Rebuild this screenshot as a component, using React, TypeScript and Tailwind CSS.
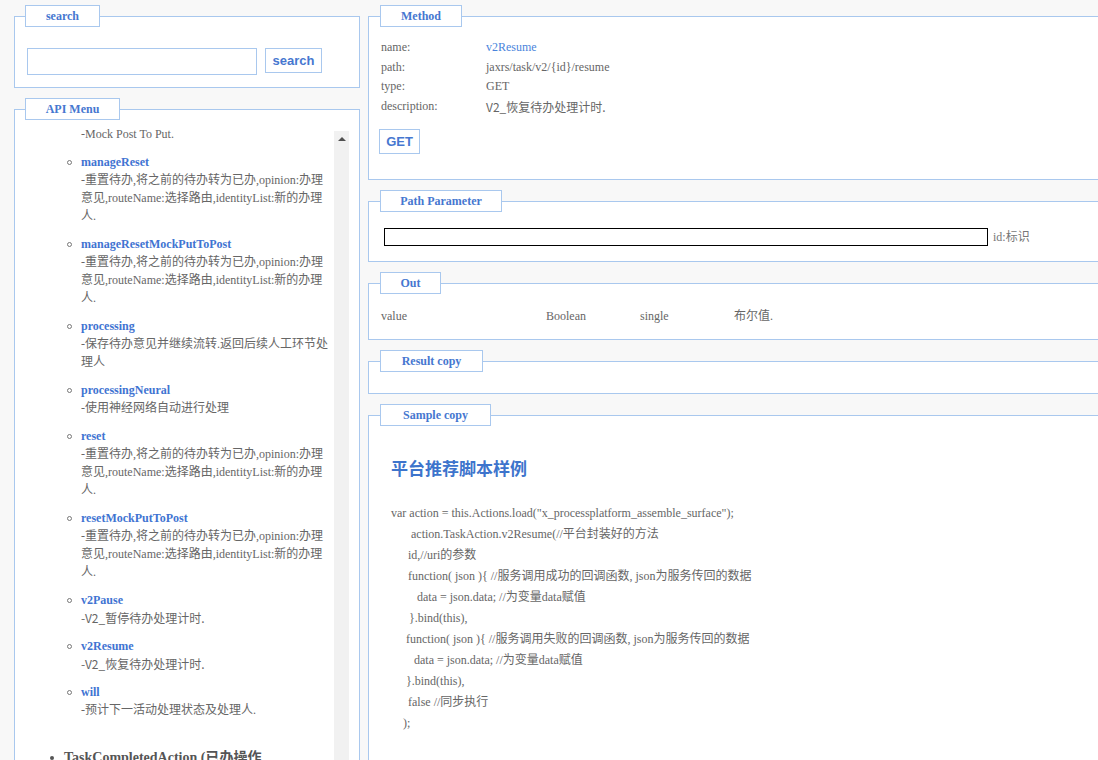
import type { ReactNode } from 'react';

const serif = "font-['Liberation_Serif','Noto_Sans_CJK_SC',serif]";

function Legend({ w, children }: { w: string; children: ReactNode }) {
  return (
    <legend
      className={`h-[22px] ${w} border border-[#a9c8ee] bg-white text-left text-[12px] font-bold leading-[20px] text-[#4677d0]`}
    >
      <span className="block w-full text-center">{children}</span>
    </legend>
  );
}

const resetDesc =
  '-重置待办,将之前的待办转为已办,opinion:办理意见,routeName:选择路由,identityList:新的办理人.';

const menuItems: { title: string; desc: string; sans?: boolean }[] = [
  { title: 'manageReset', desc: resetDesc },
  { title: 'manageResetMockPutToPost', desc: resetDesc },
  { title: 'processing', desc: '-保存待办意见并继续流转.返回后续人工环节处理人' },
  { title: 'processingNeural', desc: '-使用神经网络自动进行处理' },
  { title: 'reset', desc: resetDesc },
  { title: 'resetMockPutToPost', desc: resetDesc },
  { title: 'v2Pause', desc: '-V2_暂停待办处理计时.', sans: true },
  { title: 'v2Resume', desc: '-V2_恢复待办处理计时.', sans: true },
  { title: 'will', desc: '-预计下一活动处理状态及处理人.' },
];

const codeLines: { pad: string; text: string }[] = [
  { pad: 'pl-0', text: 'var action = this.Actions.load("x_processplatform_assemble_surface");' },
  { pad: 'pl-[20px]', text: 'action.TaskAction.v2Resume(//平台封装好的方法' },
  { pad: 'pl-[17px]', text: 'id,//uri的参数' },
  { pad: 'pl-[17px]', text: 'function( json ){ //服务调用成功的回调函数, json为服务传回的数据' },
  { pad: 'pl-[26px]', text: 'data = json.data; //为变量data赋值' },
  { pad: 'pl-[18px]', text: '}.bind(this),' },
  { pad: 'pl-[15px]', text: 'function( json ){ //服务调用失败的回调函数, json为服务传回的数据' },
  { pad: 'pl-[23px]', text: 'data = json.data; //为变量data赋值' },
  { pad: 'pl-[15px]', text: '}.bind(this),' },
  { pad: 'pl-[17px]', text: 'false //同步执行' },
  { pad: 'pl-[12px]', text: ');' },
];

function MenuPanel() {
  return (
    <fieldset className="h-[700px] w-[346px] shrink-0 border border-[#a9c8ee] bg-white pl-[10px] pr-[10px]">
      <Legend w="w-[95px]">API Menu</Legend>
      <div className="mt-[7px] flex h-[640px] overflow-hidden">
        <div className="w-[309px] overflow-hidden">
          <ul className="-mt-[2px] pl-[42px]">
            <li className="mb-[11px] pl-[14px] text-[12px] leading-[18px] text-[#666]">
              -Mock Post To Put.
            </li>
            {menuItems.map((item) => (
              <li key={item.title} className="mb-[11px] flex">
                <div className="w-[14px] shrink-0 pt-[6px]">
                  <span className="block h-[5px] w-[5px] rounded-full border border-[#777]" />
                </div>
                <div className="w-[250px]">
                  <div className="h-[17px] text-[12px] font-bold leading-[17px] text-[#3f74d2]">
                    {item.title}
                  </div>
                  <div
                    className={`text-[12px] leading-[18px] text-[#666] ${
                      item.sans ? "font-['Noto_Sans_CJK_SC',sans-serif]" : ''
                    }`}
                  >
                    {item.desc}
                  </div>
                </div>
              </li>
            ))}
          </ul>
          <div className="mt-[29px] flex items-center pl-[25px]">
            <span className="mr-[10px] block h-[4px] w-[4px] shrink-0 rounded-full bg-[#555]" />
            <span className="text-[14px] font-bold leading-[20px] text-[#555]">
              TaskCompletedAction (已办操作
            </span>
          </div>
        </div>
        <div className="mt-[4px] flex h-full w-[15px] justify-center bg-[#f1f1f1] pt-[6px]">
          <span className="block h-0 w-0 border-x-[4px] border-b-[4px] border-x-transparent border-b-[#505050]" />
        </div>
      </div>
    </fieldset>
  );
}

export default function App() {
  return (
    <div className={`flex h-[760px] w-[1098px] overflow-hidden bg-[#f8f8f8] ${serif}`}>
      <div className="flex w-[368px] shrink-0 flex-col gap-[10px] pl-[14px] pt-[5px]">
        <fieldset className="h-[83px] w-[346px] shrink-0 border border-[#a9c8ee] bg-white pl-[10px]">
          <Legend w="w-[75px]">search</Legend>
          <div className="mt-[21px] flex items-start gap-[8px] pl-[2px]">
            <input className="h-[27px] w-[230px] border border-[#a9c8ee] bg-white outline-none" />
            <button className="h-[25px] w-[57px] border border-[#a9c8ee] bg-white font-['Liberation_Sans',sans-serif] text-[13px] font-bold text-[#4677d0]">
              search
            </button>
          </div>
        </fieldset>
        <MenuPanel />
      </div>

      <div className="flex min-w-0 flex-1 flex-col gap-[10px] pt-[5px]">
        <fieldset className="h-[175px] w-[760px] shrink-0 border border-[#a9c8ee] bg-white pl-[11px]">
          <Legend w="w-[82px]">Method</Legend>
          <div className="grid grid-cols-[105px_1fr] pl-[1px] pt-[11px] text-[12px] leading-[19.5px] text-[#666]">
            <span>name:</span>
            <span className="text-[#4a84dc]">v2Resume</span>
            <span>path:</span>
            <span>jaxrs/task/v2/{'{id}'}/resume</span>
            <span>type:</span>
            <span>GET</span>
            <span>description:</span>
            <span className="font-['Noto_Sans_CJK_SC',sans-serif]">V2_恢复待办处理计时.</span>
          </div>
          <button className="-ml-[1px] mt-[13px] h-[25px] w-[41px] border border-[#a9c8ee] bg-white font-['Liberation_Sans',sans-serif] text-[13px] font-bold text-[#4677d0]">
            GET
          </button>
        </fieldset>

        <fieldset className="h-[72px] w-[760px] shrink-0 border border-[#a9c8ee] bg-white pl-[11px]">
          <Legend w="w-[122px]">Path Parameter</Legend>
          <div className="mt-[16px] flex items-center gap-[5px] pl-[4px]">
            <input className="h-[18px] w-[604px] border border-black bg-white outline-none" />
            <span className="text-[12px] text-[#777]">id:标识</span>
          </div>
        </fieldset>

        <fieldset className="h-[68px] w-[760px] shrink-0 border border-[#a9c8ee] bg-white pl-[11px]">
          <Legend w="w-[61px]">Out</Legend>
          <div className="mt-[13px] flex pl-[1px] text-[12px] leading-[18px] text-[#666]">
            <span className="w-[165px]">value</span>
            <span className="w-[94px]">Boolean</span>
            <span className="w-[94px]">single</span>
            <span>布尔值.</span>
          </div>
        </fieldset>

        <fieldset className="h-[44px] w-[760px] shrink-0 border border-[#a9c8ee] bg-white pl-[11px]">
          <Legend w="w-[103px]">Result copy</Legend>
        </fieldset>

        <fieldset className="h-[400px] w-[760px] shrink-0 border border-[#a9c8ee] bg-white pl-[11px]">
          <Legend w="w-[111px]">Sample copy</Legend>
          <div className="pl-[11px]">
            <h2 className="mt-[30px] font-['Noto_Sans_CJK_SC',sans-serif] text-[17px] font-bold leading-[24px] text-[#3d74cc]">
              平台推荐脚本样例
            </h2>
            <div className="mt-[23px] text-[12px] leading-[21px] text-[#666]">
              {codeLines.map((line, i) => (
                <div key={i} className={line.pad}>
                  {line.text}
                </div>
              ))}
            </div>
          </div>
        </fieldset>
      </div>
    </div>
  );
}
